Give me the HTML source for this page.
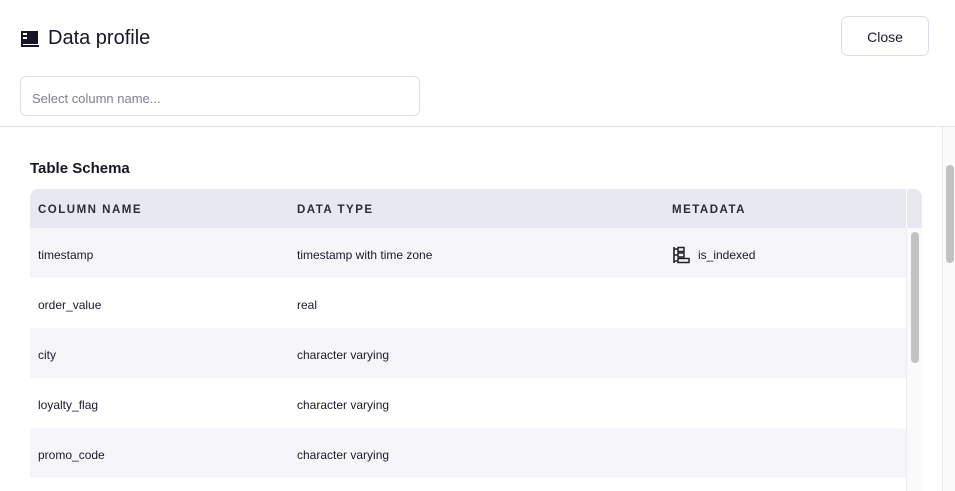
<!DOCTYPE html>
<html><head><style>
*{box-sizing:border-box;margin:0;padding:0}
body{width:955px;height:491px;overflow:hidden;background:#fff;font-family:"Liberation Sans",Arial,sans-serif;color:#1a1a2a;position:relative}
.title{position:absolute;left:20px;top:27px;display:flex;align-items:center;font-size:20px;color:#161626}
.close{position:absolute;left:841px;top:16px;width:88px;height:40px;border:1px solid #dcdce6;border-radius:7px;font-size:14px;display:flex;align-items:center;justify-content:center;color:#1a1a2a;padding-top:2px}
.search{position:absolute;left:20px;top:76px;width:400px;height:40px;border:1px solid #dcdce6;border-radius:6px;font-size:13px;color:#80808c;padding:14px 11px}
.hr{position:absolute;left:0;top:126px;width:955px;height:1px;background:#e2e2ea}
.otrack{position:absolute;left:942px;top:127px;width:13px;height:364px;border-left:1px solid #ececf0;background:#fafafa}
.othumb{position:absolute;left:946px;top:165px;width:8px;height:98px;background:#c2c2c2;border-radius:4px}
h3{position:absolute;left:30px;top:160px;font-size:15px;font-weight:bold;color:#161626}
.tbl{position:absolute;left:30px;top:189px;width:892px}
.head{height:39px;background:#e8e8f0;border-radius:8px 8px 0 0;position:relative;font-size:11.5px;font-weight:bold;letter-spacing:1.5px;color:#2a2a38}
.head span,.row span{position:absolute;top:2px;line-height:39px}
.row{height:50px;position:relative;font-size:12px;width:876px}
.row span{line-height:50px}
.sep{position:absolute;left:876px;top:0;width:1px;height:39px;background:#fff}
.itrack{position:absolute;left:906px;top:228px;width:16px;height:263px;background:#fafafa;border-left:1px solid #ececf0}
.ithumb{position:absolute;left:911px;top:232px;width:8px;height:131px;background:#c2c2c2;border-radius:4px}
</style></head><body>
<div class="title"><svg width="20" height="18" viewBox="0 0 20 18" style="margin-right:8px"><rect x="1" y="1" width="17" height="13" fill="#161626"/><rect x="3" y="3" width="4" height="2" fill="#fff"/><rect x="3" y="7" width="4" height="2" fill="#fff"/><rect x="1" y="14" width="2" height="3" fill="#161626"/><rect x="1" y="15" width="18" height="2" fill="#161626"/></svg>Data profile</div>
<div class="close">Close</div>
<div class="search">Select column name...</div>
<div class="hr"></div>
<div class="otrack"></div><div class="othumb"></div>
<h3>Table Schema</h3>
<div class="tbl">
<div class="head"><span style="left:8px">COLUMN NAME</span><span style="left:267px">DATA TYPE</span><span style="left:642px">METADATA</span><div class="sep"></div></div>
<div>
<div class="row" style="background:#f6f6fa"><span style="left:8px">timestamp</span><span style="left:267px">timestamp with time zone</span><span style="left:642px;display:flex;align-items:center"><svg width="20" height="18" viewBox="0 0 20 18" style="margin-right:6px"><path d="M2 1v16M2 3h4M2 9h4M2 15h4" stroke="#222" stroke-width="1.6" fill="none"/><rect x="6" y="1.5" width="6" height="4" stroke="#222" stroke-width="1.5" fill="none"/><rect x="6" y="7" width="6" height="4" stroke="#222" stroke-width="1.5" fill="none"/><rect x="6" y="12.5" width="11" height="4" stroke="#222" stroke-width="1.5" fill="none"/></svg>is_indexed</span></div>
<div class="row" style="background:#fff"><span style="left:8px">order_value</span><span style="left:267px">real</span></div>
<div class="row" style="background:#f6f6fa"><span style="left:8px">city</span><span style="left:267px">character varying</span></div>
<div class="row" style="background:#fff"><span style="left:8px">loyalty_flag</span><span style="left:267px">character varying</span></div>
<div class="row" style="background:#f6f6fa"><span style="left:8px">promo_code</span><span style="left:267px">character varying</span></div>
</div></div>
<div class="itrack"></div><div class="ithumb"></div>
</body></html>
